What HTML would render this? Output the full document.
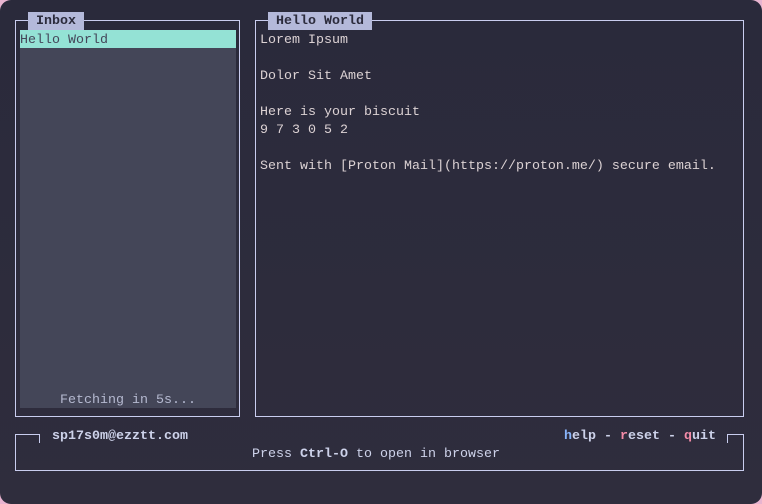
<!DOCTYPE html>
<html><head><meta charset="utf-8"><style>
*{margin:0;padding:0;box-sizing:border-box}
html,body{width:762px;height:504px;overflow:hidden;background:#e8b4d0}
#win{position:absolute;left:0;top:0;width:762px;height:504px;border-radius:11px;background:linear-gradient(180deg,#2a2a3b 0%,#2f2d3d 100%);overflow:hidden}
.t{position:absolute;font-family:"Liberation Mono",monospace;font-size:13.33px;line-height:18px;white-space:pre;color:#cdd2ea;padding-top:2px}
.b{position:absolute;border:1.2px solid #c9cdef}
.l{position:absolute;background:#c9cdef}
.lab{background:#b4b9da;color:#2b2b3c;font-weight:bold;padding-top:1px}
</style></head><body><div id="win">
<div class="b" style="left:15px;top:20px;width:225px;height:397px"></div>
<div class="b" style="left:255px;top:20px;width:489px;height:397px"></div>
<div style="position:absolute;left:20px;top:30px;width:216px;height:378px;background:#444658"></div>
<div style="position:absolute;left:20px;top:30px;width:216px;height:18px;background:#94e2d5"></div>
<div class="t lab" style="left:28px;top:12px;height:18px"> Inbox </div>
<div class="t lab" style="left:268px;top:12px;height:18px"> Hello World </div>
<div class="t" style="left:20px;top:30px;color:#45475a">Hello World</div>
<div class="t" style="left:60px;top:390px;color:#b5b9d0">Fetching in 5s...</div>
<div class="t" style="left:260px;top:30px;color:#dcd2d4">Lorem Ipsum

Dolor Sit Amet

Here is your biscuit
9 7 3 0 5 2

Sent with [Proton Mail](https://proton.me/) secure email.</div>
<div class="l" style="left:15px;top:434px;width:1.2px;height:37px"></div>
<div class="l" style="left:743px;top:434px;width:1.2px;height:37px"></div>
<div class="l" style="left:15px;top:470px;width:729px;height:1.2px"></div>
<div class="l" style="left:15px;top:434px;width:25px;height:1.2px"></div>
<div class="l" style="left:39px;top:434px;width:1.2px;height:9px"></div>
<div class="l" style="left:727px;top:434px;width:17px;height:1.2px"></div>
<div class="l" style="left:727px;top:434px;width:1.2px;height:9px"></div>
<div class="t" style="left:52px;top:426px;font-weight:bold;color:#cdd2ea">sp17s0m@ezztt.com</div>
<div class="t" style="left:564px;top:426px;font-weight:bold;color:#cdd2ea"><span style="color:#89b4fa">h</span>elp - <span style="color:#f38ba8">r</span>eset - <span style="color:#f38ba8">q</span>uit</div>
<div class="t" style="left:252px;top:444px;color:#cdd2ea">Press <b>Ctrl-O</b> to open in browser</div>
</div></body></html>
